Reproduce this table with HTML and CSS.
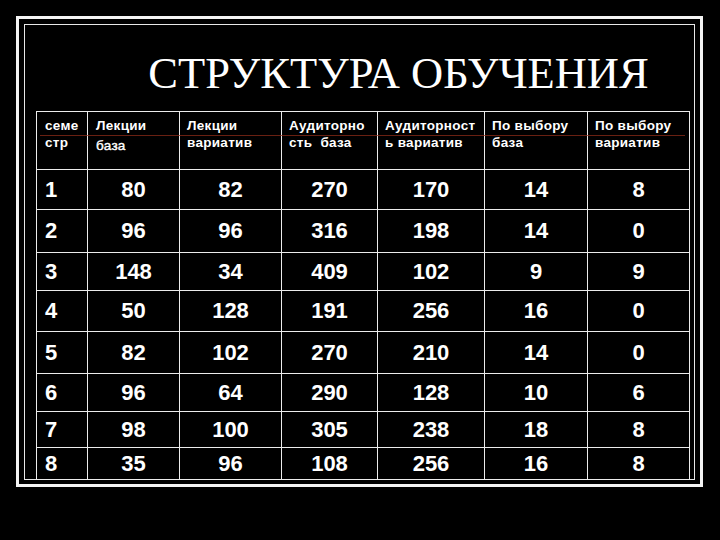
FILE: index.html
```html
<!DOCTYPE html>
<html lang="ru">
<head>
<meta charset="utf-8">
<title>Структура обучения</title>
<link rel="stylesheet" href="styles.css">
</head>
<body>
<div class="frame">
  <div class="inner">
    <h1 class="title">СТРУКТУРА ОБУЧЕНИЯ</h1>
    <div class="table-wrap">
      <table class="grid">
        <colgroup>
          <col class="c1"><col class="c2"><col class="c3"><col class="c4"><col class="c5"><col class="c6"><col class="c7">
        </colgroup>
        <thead>
          <tr class="h">
            <th>семе<br>стр</th>
            <th>Лекции<br><span class="low">база</span></th>
            <th>Лекции<br>вариатив</th>
            <th>Аудиторно<br>сть&nbsp; база</th>
            <th>Аудиторност<br>ь вариатив</th>
            <th>По выбору<br>база</th>
            <th>По выбору<br>вариатив</th>
          </tr>
        </thead>
        <tbody>
          <tr class="r1"><td>1</td><td>80</td><td>82</td><td>270</td><td>170</td><td>14</td><td>8</td></tr>
          <tr class="r2"><td>2</td><td>96</td><td>96</td><td>316</td><td>198</td><td>14</td><td>0</td></tr>
          <tr class="r3"><td>3</td><td>148</td><td>34</td><td>409</td><td>102</td><td>9</td><td>9</td></tr>
          <tr class="r4"><td>4</td><td>50</td><td>128</td><td>191</td><td>256</td><td>16</td><td>0</td></tr>
          <tr class="r5"><td>5</td><td>82</td><td>102</td><td>270</td><td>210</td><td>14</td><td>0</td></tr>
          <tr class="r6"><td>6</td><td>96</td><td>64</td><td>290</td><td>128</td><td>10</td><td>6</td></tr>
          <tr class="r7"><td>7</td><td>98</td><td>100</td><td>305</td><td>238</td><td>18</td><td>8</td></tr>
          <tr class="r8"><td>8</td><td>35</td><td>96</td><td>108</td><td>256</td><td>16</td><td>8</td></tr>
        </tbody>
      </table>
      <div class="redline"></div>
    </div>
  </div>
</div>
</body>
</html>
```
FILE: styles.css
```css
html, body {
  margin: 0;
  padding: 0;
  background: #000;
  width: 720px;
  height: 540px;
  overflow: hidden;
}

.frame {
  box-sizing: border-box;
  margin: 16px 0 0 16px;
  width: 687px;
  height: 471px;
  border: 3px solid #f4f4f4;
  padding: 5px 5px 4px 5px;
}

.inner {
  box-sizing: border-box;
  width: 671px;
  height: 456px;
  border: 1px solid #e8e8e8;
  display: flex;
  flex-direction: column;
}

.title {
  margin: 24px 0 0 0;
  padding-left: 78px;
  height: 62px;
  font-family: "Liberation Serif", "Times New Roman", serif;
  font-weight: normal;
  font-size: 44.5px;
  line-height: 48px;
  color: #fff;
  text-align: center;
  white-space: nowrap;
}

.table-wrap {
  position: relative;
  margin-left: 11px;
  width: 653px;
}

.grid {
  border-collapse: collapse;
  table-layout: fixed;
  width: 653px;
  color: #fff;
  font-family: "Liberation Sans", Arial, sans-serif;
  margin-bottom: -1px;
}

.grid th, .grid td {
  border: 1px solid #ececec;
  padding: 0;
  overflow: hidden;
  white-space: nowrap;
}

.c1 { width: 51px; }
.c2 { width: 92px; }
.c3 { width: 102px; }
.c4 { width: 96px; }
.c5 { width: 107px; }
.c6 { width: 103px; }
.c7 { width: 102px; }

.grid th {
  vertical-align: top;
  text-align: left;
  font-weight: bold;
  font-size: 13.5px;
  line-height: 17px;
  padding: 5px 4px 0 7px;
  letter-spacing: 0.3px;
}

.grid th:first-child,
.grid th:nth-child(2) {
  padding-left: 8px;
}

.low {
  display: inline-block;
  margin-top: 3px;
  font-weight: normal;
  -webkit-text-stroke: 0.4px #fff;
}

.grid td {
  text-align: center;
  vertical-align: middle;
  font-weight: bold;
  font-size: 22px;
  line-height: 24px;
}

.grid td:first-child {
  text-align: left;
  padding-left: 8px;
}

.h { height: 58px; }
.r1 { height: 40px; }
.r2 { height: 43px; }
.r3 { height: 38px; }
.r4 { height: 41px; }
.r5 { height: 42px; }
.r6 { height: 38px; }
.r7 { height: 36px; }
.r8 { height: 32px; }

.redline {
  position: absolute;
  left: 4px;
  right: 4px;
  top: 24px;
  height: 1px;
  background: rgba(150, 45, 25, 0.7);
}
```
